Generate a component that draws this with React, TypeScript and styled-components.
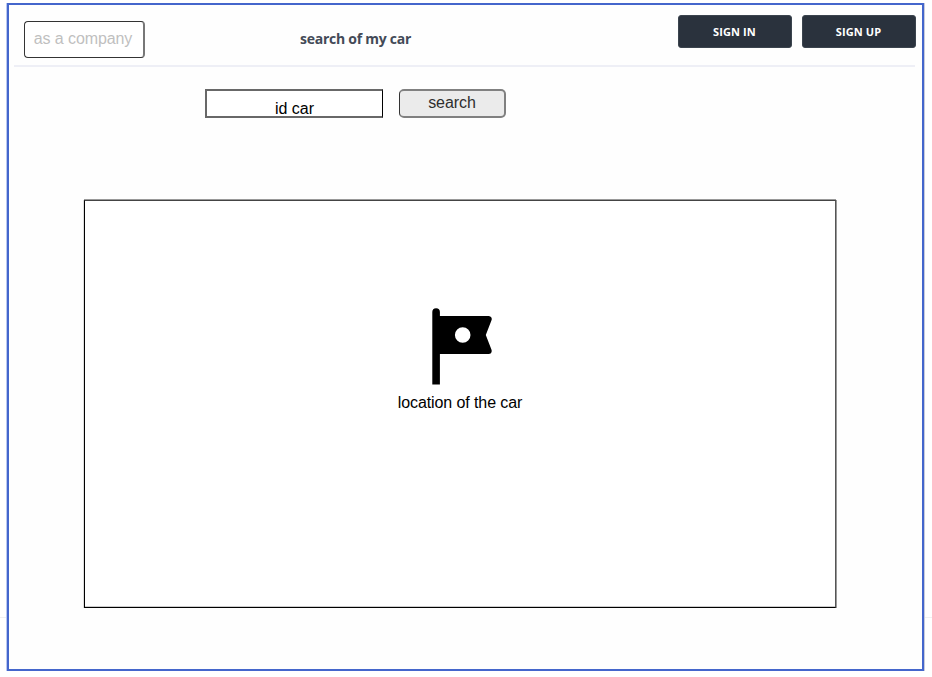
import React from "react";
import styled, { createGlobalStyle } from "styled-components";

const GlobalStyle = createGlobalStyle`
  * { box-sizing: border-box; }
  body {
    margin: 0;
    background: #fff;
    color: #000;
    font: 16px/18px "Liberation Sans", Arial, sans-serif;
  }
`;

const Page = styled.div`
  height: 677px;
  padding: 3px 8px 6px 7px;
  overflow: hidden;
  background: linear-gradient(#f0f0f1, #f0f0f1) 0 617px / 100% 1px no-repeat #fff;
`;

const Frame = styled.main`
  height: 668px;
  border: 2px solid #4466cc;
  background: #fefefe;
  box-shadow: -1px 0 #b9c8f1, 1px 0 #c9ccda;
`;

const Header = styled.header`
  display: flex;
  align-items: flex-start;
  height: 62px;
  margin: 0 7px 0 5px;
  border-bottom: 2px solid #eeeff6;
`;

const CompanyField = styled.button`
  width: 121px;
  height: 37px;
  margin: 16px 0 0 10px;
  padding: 0 0 1px;
  border: 1px solid #333;
  border-right: 2px solid #777;
  border-radius: 4px;
  background: #fff;
  color: #bfbfbf;
  font: inherit;
  letter-spacing: -0.09px;
  text-align: center;
  text-indent: -2px;
`;

const Title = styled.h1`
  width: 111px;
  margin: 24px 0 0 155px;
  color: #434a57;
  font: 700 14px/20px "Open Sans", sans-serif;
  letter-spacing: -0.26px;
  white-space: nowrap;
`;

const Account = styled.nav`
  display: flex;
  gap: 10px;
  margin: 10px -1px 0 auto;
`;

const AccountButton = styled.button`
  width: 114px;
  height: 33px;
  padding: 0 1px 0 0;
  border: 1px solid #3b444e;
  border-radius: 3px;
  background: #2a323d;
  color: #fff;
  font: 700 11px/15px "Open Sans", sans-serif;
  letter-spacing: 0.1px;
`;

const SearchForm = styled.div`
  display: flex;
  gap: 16px;
  margin: 22px 0 0 196px;
`;

const CarField = styled.div`
  width: 178px;
  height: 29px;
  padding-top: 9px;
  border: 2px solid #686868;
  border-right: 1px solid #000;
  background: #fff;
  text-align: center;
`;

const SearchButton = styled.button`
  width: 107px;
  height: 29px;
  padding: 0 0 1px;
  border: 2px solid #808080;
  border-left: 1px solid #333;
  border-radius: 5px;
  background: #ebebeb;
  color: #2e2e2e;
  font: inherit;
  letter-spacing: -0.05px;
`;

const MapPanel = styled.section`
  display: flex;
  flex-direction: column;
  align-items: center;
  width: 752px;
  height: 408px;
  margin: 82px 0 0 75px;
  padding-top: 107px;
  border: 1px solid #000;
  border-top-color: #444;
  border-right-color: #555;
  background: #fff;
  box-shadow:
    0 -1px #999,
    1px 0 #999,
    -1px 0 #ddd,
    inset 0 -1px #ccc;
`;

const FlagIcon = styled.svg`
  display: block;
  width: 60px;
  height: 77px;
  margin: 0 0 9px 4px;
`;

const Caption = styled.span`
  letter-spacing: -0.09px;
`;

const Flag = () => (
  <FlagIcon viewBox="0 0 60 77" aria-hidden="true">
    <path
      fillRule="evenodd"
      d="M0.3 76.6V4A3.8 3.8 0 0 1 7.9 4V8H57Q60.7 8.7 59.5 12.3L53.8 27L59.5 41.7Q60.5 45.5 57 46H7.9V76.6ZM30.7 19.2A7.8 7.8 0 1 0 30.7 34.8A7.8 7.8 0 1 0 30.7 19.2Z"
    />
  </FlagIcon>
);

export default function App() {
  return (
    <>
      <GlobalStyle />
      <Page>
        <Frame>
          <Header>
            <CompanyField>as a company</CompanyField>
            <Title>search of my car</Title>
            <Account>
              <AccountButton>SIGN IN</AccountButton>
              <AccountButton>SIGN UP</AccountButton>
            </Account>
          </Header>
          <SearchForm>
            <CarField>id car</CarField>
            <SearchButton>search</SearchButton>
          </SearchForm>
          <MapPanel>
            <Flag />
            <Caption>location of the car</Caption>
          </MapPanel>
        </Frame>
      </Page>
    </>
  );
}
